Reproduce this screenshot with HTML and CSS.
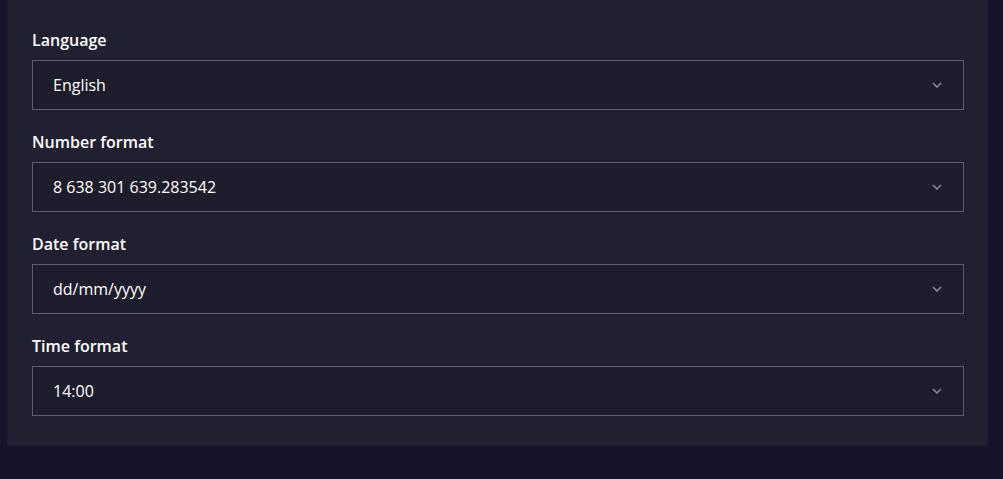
FILE: index.html
```html
<!DOCTYPE html>
<html lang="en">
<head>
    <meta charset="UTF-8">
    <title>Regional settings</title>
    <link rel="stylesheet" href="styles.css">
</head>
<body>
    <div class="panel">
        <div class="form-group">
            <label>Language</label>
            <div class="select">
                <span>English</span>
                <svg class="chevron" viewBox="0 0 10 6"><path d="M1 1l4 4 4-4"/></svg>
            </div>
        </div>
        <div class="form-group">
            <label>Number format</label>
            <div class="select">
                <span>8 638 301 639.283542</span>
                <svg class="chevron" viewBox="0 0 10 6"><path d="M1 1l4 4 4-4"/></svg>
            </div>
        </div>
        <div class="form-group">
            <label>Date format</label>
            <div class="select">
                <span>dd/mm/yyyy</span>
                <svg class="chevron" viewBox="0 0 10 6"><path d="M1 1l4 4 4-4"/></svg>
            </div>
        </div>
        <div class="form-group">
            <label>Time format</label>
            <div class="select">
                <span>14:00</span>
                <svg class="chevron" viewBox="0 0 10 6"><path d="M1 1l4 4 4-4"/></svg>
            </div>
        </div>
    </div>
</body>
</html>
```

FILE: styles.css
```css
body {
    margin: 0;
    background-color: #15142a;
    font-family: "Open Sans", "Noto Sans", sans-serif;
    color: #ffffff;
    height: 479px;
}
.panel {
    margin: 0 15px 0 7px;
    padding: 30px 24px 30px 25px;
    background-color: #212030;
    display: flex;
    flex-direction: column;
    gap: 22px;
}
.form-group {
    display: flex;
    flex-direction: column;
    gap: 10px;
}
label {
    font-size: 16px;
    font-weight: 600;
    line-height: 19px;
    margin-top: 1px;
}
.select {
    height: 48px;
    border: 1px solid #5f5e70;
    background-color: #1e1d2c;
    display: flex;
    align-items: center;
    justify-content: space-between;
    padding: 0 20px;
    font-size: 16px;
    font-weight: 500;
}
.chevron {
    width: 10px;
    height: 6px;
    margin-right: 1px;
    fill: none;
    stroke: #8b8a9a;
    stroke-width: 1.5;
}
```
